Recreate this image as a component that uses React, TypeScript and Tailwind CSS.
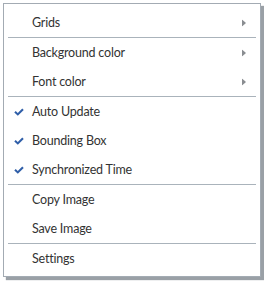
import React from "react";

const Arrow = () => (
  <svg width="4" height="7" viewBox="0 0 4 7" className="absolute right-[14px] top-1/2 -translate-y-1/2">
    <path d="M0 0 L4 3.5 L0 7 Z" fill="#8a8d91" />
  </svg>
);

const Check = () => (
  <svg width="10" height="8" viewBox="0 0 10 8" className="absolute left-[10px] top-1/2 -translate-y-1/2">
    <path d="M1 3.8 L3.8 6.4 L9 1.2" stroke="#2f5ea8" strokeWidth="2.1" fill="none" />
  </svg>
);

type Item = { label: string; arrow?: boolean; check?: boolean };

const Row = ({ label, arrow, check }: Item) => (
  <div className="relative h-[29px] flex items-center pt-[2px] pl-[28px] text-[12.5px] tracking-[-0.2px] text-[#333333]">
    {check && <Check />}
    <span>{label}</span>
    {arrow && <Arrow />}
  </div>
);

const Sep = () => <div className="h-px bg-[#aab3bb] mx-[4px]" />;

export default function App() {
  const groups: Item[][] = [
    [{ label: "Grids", arrow: true }],
    [
      { label: "Background color", arrow: true },
      { label: "Font color", arrow: true },
    ],
    [
      { label: "Auto Update", check: true },
      { label: "Bounding Box", check: true },
      { label: "Synchronized Time", check: true },
    ],
    [{ label: "Copy Image" }, { label: "Save Image" }],
    [{ label: "Settings" }],
  ];
  return (
    <div className="w-[264px] h-[282px] bg-white pt-[3px] pl-[3px]">
      <div
        className="w-[258px] h-[274px] bg-white border border-[#a3abb3] pt-[4px] pb-[2px] shadow-[3px_3px_1px_0_#9aa0a6]"
        style={{ fontFamily: "Lato, 'Open Sans', sans-serif" }}
      >
        {groups.map((g, i) => (
          <React.Fragment key={i}>
            {i > 0 && <Sep />}
            {g.map((it) => (
              <Row key={it.label} {...it} />
            ))}
          </React.Fragment>
        ))}
      </div>
    </div>
  );
}
